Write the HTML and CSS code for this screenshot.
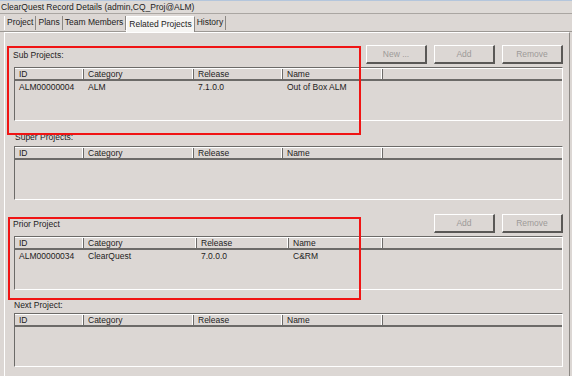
FILE: index.html
```html
<!DOCTYPE html>
<html lang="en">
<head>
    <meta charset="UTF-8">
    <title>ClearQuest Record Details</title>
    <link rel="stylesheet" href="styles.css">
</head>
<body>
<div class="window">
    <div class="titlebar">ClearQuest Record Details (admin,CQ_Proj@ALM)</div>

    <!-- Tab strip -->
    <div class="tabs">
        <span class="tab">Project</span>
        <span class="tab">Plans</span>
        <span class="tab">Team Members</span>
        <span class="tab tab-active">Related Projects</span>
        <span class="tab">History</span>
    </div>

    <div class="panel">
        <!-- Sub Projects -->
        <div class="group-head">
            <span class="group-label">Sub Projects:</span>
            <div class="buttons">
                <button class="button" disabled>New ...</button>
                <button class="button" disabled>Add</button>
                <button class="button" disabled>Remove</button>
            </div>
        </div>
        <div class="grid grid-sub">
            <div class="grid-header">
                <span>ID</span><span>Category</span><span>Release</span><span>Name</span><span></span>
            </div>
            <div class="grid-row">
                <span>ALM00000004</span><span>ALM</span><span>7.1.0.0</span><span>Out of Box ALM</span><span></span>
            </div>
        </div>

        <!-- Super Projects -->
        <div class="group-label label-super">Super Projects:</div>
        <div class="grid grid-super">
            <div class="grid-header">
                <span>ID</span><span>Category</span><span>Release</span><span>Name</span><span></span>
            </div>
        </div>

        <!-- Prior Project -->
        <div class="group-head head-prior">
            <span class="group-label">Prior Project</span>
            <div class="buttons">
                <button class="button" disabled>Add</button>
                <button class="button" disabled>Remove</button>
            </div>
        </div>
        <div class="grid grid-prior">
            <div class="grid-header">
                <span>ID</span><span>Category</span><span>Release</span><span>Name</span><span></span>
            </div>
            <div class="grid-row">
                <span>ALM00000034</span><span>ClearQuest</span><span>7.0.0.0</span><span>C&amp;RM</span><span></span>
            </div>
        </div>

        <!-- Next Project -->
        <div class="group-label label-next">Next Project:</div>
        <div class="grid grid-next">
            <div class="grid-header">
                <span>ID</span><span>Category</span><span>Release</span><span>Name</span><span></span>
            </div>
        </div>

        <!-- red highlight boxes drawn over the screen -->
        <div class="callout callout-sub"></div>
        <div class="callout callout-prior"></div>
    </div>
</div>
</body>
</html>
```

FILE: styles.css
```css
* {
    box-sizing: border-box;
    margin: 0;
    padding: 0;
}

body {
    background-color: #dcd7d4;
    font-family: "Liberation Sans", Arial, sans-serif;
    font-size: 8.5px;
    color: #1c1c1c;
    width: 572px;
    height: 376px;
    overflow: hidden;
}

.window {
    width: 572px;
    height: 376px;
    display: flex;
    flex-direction: column;
}

.titlebar {
    height: 14px;
    line-height: 13px;
    padding-left: 1px;
    border-top: 1px solid #b4c6dc;
    border-bottom: 1px solid #aaa6a2;
    background-color: #dedad7;
}

.tabs {
    height: 18px;
    display: flex;
    align-items: flex-end;
    padding-left: 4px;
    border-bottom: 1px solid #9c9894;
}

.tab {
    height: 14px;
    line-height: 13px;
    padding: 0 2px;
    border-right: 1px solid #8c8884;
    margin-bottom: 1px;
}

.tab:first-child {
    border-left: 1px solid #ffffff;
}

.tab-active {
    height: 16px;
    margin-bottom: -1px;
    line-height: 15px;
    background-color: #f6f5f3;
    border-left: 1px solid #ffffff;
    border-top: 1px solid #ffffff;
    border-right: 1px solid #8c8884;
    padding: 0 2px;
}

.panel {
    position: relative;
    flex-grow: 1;
    margin-left: 4px;
    margin-right: 2px;
    padding: 12px 6px 0 9px;
    border-left: 1px solid #ffffff;
    border-top: 1px solid #ffffff;
    border-right: 1px solid #8c8884;
}

.group-head {
    display: flex;
    align-items: center;
    justify-content: space-between;
    height: 20px;
}

.group-head .group-label {
    margin-left: -1px;
}

.head-prior {
    margin-top: 14px;
}

.group-label {
    display: block;
    height: 12px;
    line-height: 12px;
}

.label-super {
    margin-top: 10px;
    margin-bottom: 3px;
    padding-left: 1px;
}

.label-next {
    margin-top: 9px;
    margin-bottom: 2px;
}

.buttons {
    display: flex;
    gap: 7px;
    align-self: flex-start;
}

.button {
    width: 61px;
    height: 19px;
    font-family: inherit;
    font-size: 8.5px;
    color: #9c9a98;
    background-color: #dcd7d4;
    border-top: 1px solid #ffffff;
    border-left: 1px solid #ffffff;
    border-right: 2px solid #5a5856;
    border-bottom: 2px solid #5a5856;
}

.grid {
    height: 54px;
    margin-top: 2px;
    border-top: 1px solid #6c6a68;
    border-left: 1px solid #6c6a68;
    border-right: 1px solid #ffffff;
    border-bottom: 1px solid #ffffff;
}

.grid-super,
.grid-next {
    margin-top: 0;
}

.grid-header,
.grid-row {
    display: grid;
    grid-template-columns: 69px 110px 89px 100px 1fr;
}

.grid-header {
    height: 13px;
    border-top: 1px solid #ffffff;
    border-bottom: 2px solid #6c6a68;
}

.grid-header span {
    line-height: 10px;
    padding-left: 4px;
    border-right: 1px solid #6c6a68;
    box-shadow: inset -1px 0 0 #ffffff;
}

.grid-header span:last-child {
    border-right: none;
    box-shadow: none;
}

.grid-row {
    height: 12px;
    line-height: 12px;
}

.grid-row span {
    padding-left: 4px;
}

.grid-prior .grid-header,
.grid-prior .grid-row {
    grid-template-columns: 69px 113px 92px 94px 1fr;
}

.callout {
    position: absolute;
    border: 2px solid #f01414;
}

.callout-sub {
    left: 2px;
    top: 13px;
    width: 354px;
    height: 89px;
}

.callout-prior {
    left: 3px;
    top: 184px;
    width: 353px;
    height: 83px;
}
```
